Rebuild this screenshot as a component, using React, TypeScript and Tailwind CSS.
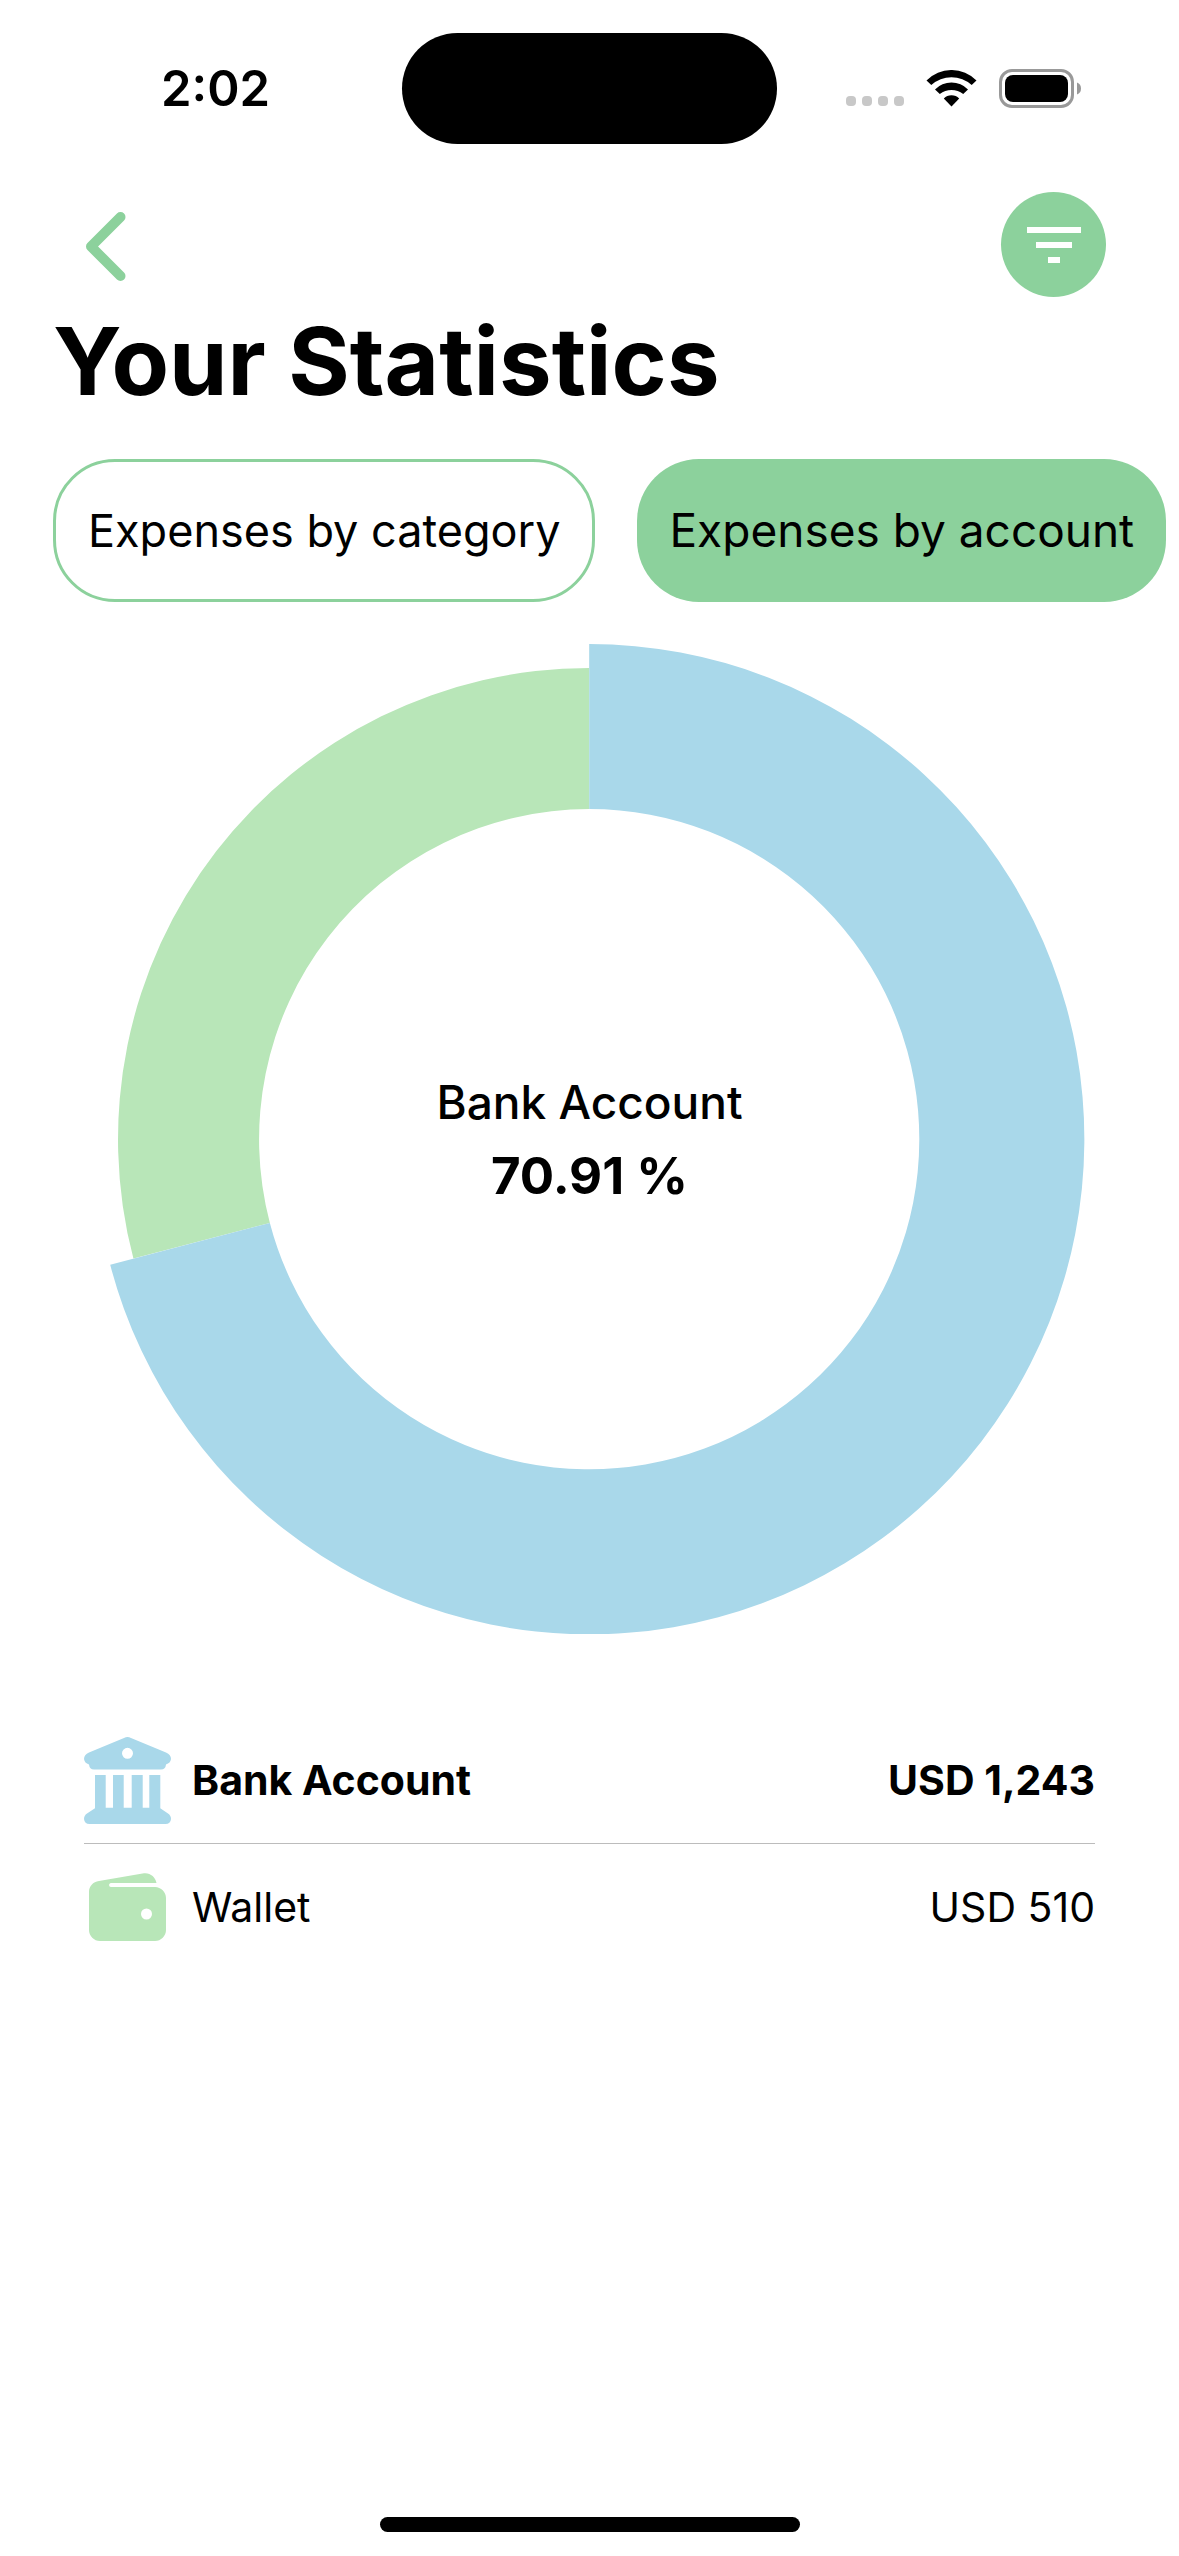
import { useState } from "react";

const BankIcon = ({ className }: { className?: string }) => (
  <svg viewBox="0 0 87 87" className={className} fill="currentColor" aria-hidden="true">
    <path
      fillRule="evenodd"
      d="M40 1Q43.500 -1 47 1L82 15.500Q87 17.500 87 22Q86.500 26 82 27.500Q81.500 32.500 77 32.500H10Q5.500 32.500 5 27.500Q0.500 26 0 22Q0 17.500 5 15.500ZM43.500 10.800A5.500 5.500 0 1 0 43.500 21.800A5.500 5.500 0 1 0 43.500 10.800Z"
    />
    <path d="M11 38H21.700V70.700H29V38H39.700V70.700H47.700V38H58.700V70.700H65.300V38H76.300V71.300L84 76.500Q87 78.500 87 82Q86.500 87 81.500 87H5.500Q0.500 87 0 82Q0 78.500 3 76.500L11 71.300Z" />
  </svg>
);

const WalletIcon = ({ className }: { className?: string }) => (
  <svg viewBox="0 0 77 68" className={className} fill="currentColor" aria-hidden="true">
    <path
      fillRule="evenodd"
      d="M67.500 10C66.500 4 61 -0.500 55 .300L10 8C4 9 0 13 0 19V57C0 63 5 68 11 68H66C72 68 77 63 77 57V25C77 19 72 14 66 14H22C19.500 14 19.500 10 22 10ZM57.500 35.500A5.500 5.500 0 1 1 57.500 46.500A5.500 5.500 0 1 1 57.500 35.500Z"
    />
  </svg>
);

const accounts = [
  { name: "Bank Account", amount: "USD 1,243", icon: BankIcon, iconClass: "w-[87px] text-[#a9d8ea]" },
  { name: "Wallet", amount: "USD 510", icon: WalletIcon, iconClass: "w-[77px] text-[#b8e6b8]" },
];

const tabs = ["Expenses by category", "Expenses by account"];

const StatusBar = () => (
  <div className="grid grid-cols-[1fr_auto_1fr] items-center pt-[33px]">
    <div className="pl-[161px] text-[49px] leading-[56px] font-semibold">2:02</div>
    <div className="w-[375px] h-[111px] rounded-full bg-black" />
    <div className="flex items-center justify-end gap-[22px] pr-[98px]">
      <svg width="58" height="38" viewBox="0 0 58 38" fill="#c8c8c8" aria-hidden="true">
        <rect x="0" y="26" width="10" height="10" rx="4" />
        <rect x="16" y="26" width="10" height="10" rx="4" />
        <rect x="32" y="26" width="10" height="10" rx="4" />
        <rect x="48" y="26" width="10" height="10" rx="4" />
      </svg>
      <svg width="51" height="38" viewBox="0 0 51 38" aria-hidden="true">
        <path d="M.500 10.500A35 35 0 0 1 50.500 10.500L45.700 15A30 30 0 0 0 5.300 15Z" />
        <path d="M9 19.500A23 23 0 0 1 42 19.500L37.200 24A19 19 0 0 0 13.800 24Z" />
        <path d="M17.800 28.500A11 11 0 0 1 33.200 28.500L25.500 36.500Z" />
      </svg>
      <svg width="82" height="39" viewBox="0 0 82 39" aria-hidden="true">
        <rect x="1.500" y="1.500" width="72" height="36" rx="11.500" fill="none" stroke="#999" strokeWidth="3" />
        <rect x="6" y="6" width="63" height="27" rx="8" />
        <path d="M78 13.500Q82 15 82 19.500Q82 24 78 25.500Z" fill="#999" />
      </svg>
    </div>
  </div>
);

const DonutChart = () => (
  <div className="relative w-[84%] mx-auto mt-[42px]">
    <svg viewBox="0 0 990 990" className="w-full" role="img" aria-label="Expenses by account">
      <path d="M495 24A471 471 0 0 0 39.400 614.400L175.800 578.700A330 330 0 0 1 495 165Z" fill="#b8e6b8" />
      <path d="M495 0A495 495 0 1 1 16.200 620.600L175.800 578.700A330 330 0 1 0 495 165Z" fill="#a9d8ea" />
    </svg>
    <div className="absolute inset-0 flex flex-col items-center justify-center leading-[74px]">
      <div className="text-[46px] font-medium">Bank Account</div>
      <div className="text-[51px] font-bold">70.91 %</div>
    </div>
  </div>
);

const App = () => {
  const [active, setActive] = useState(tabs[1]);

  return (
    <div className="bg-white min-h-screen flex flex-col text-black font-['Inter',sans-serif]">
      <StatusBar />

      <header className="flex items-center justify-between mt-12 pl-[85px] pr-[73px]">
        <button type="button" aria-label="Back">
          <svg width="42" height="74" viewBox="0 0 42 74" fill="none" stroke="#8cd19c" aria-hidden="true">
            <path d="M35.500 9L6 38.500L35.500 68" strokeWidth="10" strokeLinecap="round" strokeLinejoin="round" />
          </svg>
        </button>
        <button
          type="button"
          aria-label="Filter"
          className="w-[105px] h-[105px] rounded-full bg-[#8cd19c] flex items-center justify-center"
        >
          <svg width="54" height="36" viewBox="0 0 54 36" fill="white" aria-hidden="true">
            <path d="M0 0H54V6H0ZM9 15H45V21H9ZM21 30H33V36H21Z" />
          </svg>
        </button>
      </header>

      <h1 className="px-[53px] text-[94px] leading-[128px] font-bold">Your Statistics</h1>

      <div className="flex gap-[42px] mt-[34px] pl-[53px] overflow-hidden">
        {tabs.map((tab) => (
          <button
            key={tab}
            type="button"
            onClick={() => setActive(tab)}
            className={`h-[143px] shrink-0 px-[32px] rounded-[62px] whitespace-nowrap ${
              active === tab ? "bg-[#8cd19c] text-[46px]" : "bg-white border-3 border-[#8cd19c] text-[45px]"
            }`}
          >
            {tab}
          </button>
        ))}
      </div>

      <DonutChart />

      <ul className="mt-[84px] mx-[84px] divide-y divide-[#bcbcbc]">
        {accounts.map(({ name, amount, icon: Icon, iconClass }) => (
          <li
            key={name}
            className={`h-[126px] flex items-center text-[41px] ${name === "Bank Account" ? "font-bold" : ""}`}
          >
            <span className="w-[87px] mr-[21px] flex justify-center">
              <Icon className={iconClass} />
            </span>
            <span>{name}</span>
            <span className="ml-auto">{amount}</span>
          </li>
        ))}
      </ul>

      <div className="mt-auto mb-6 mx-auto w-[420px] h-[15px] rounded-full bg-black" />
    </div>
  );
};

export default App;
